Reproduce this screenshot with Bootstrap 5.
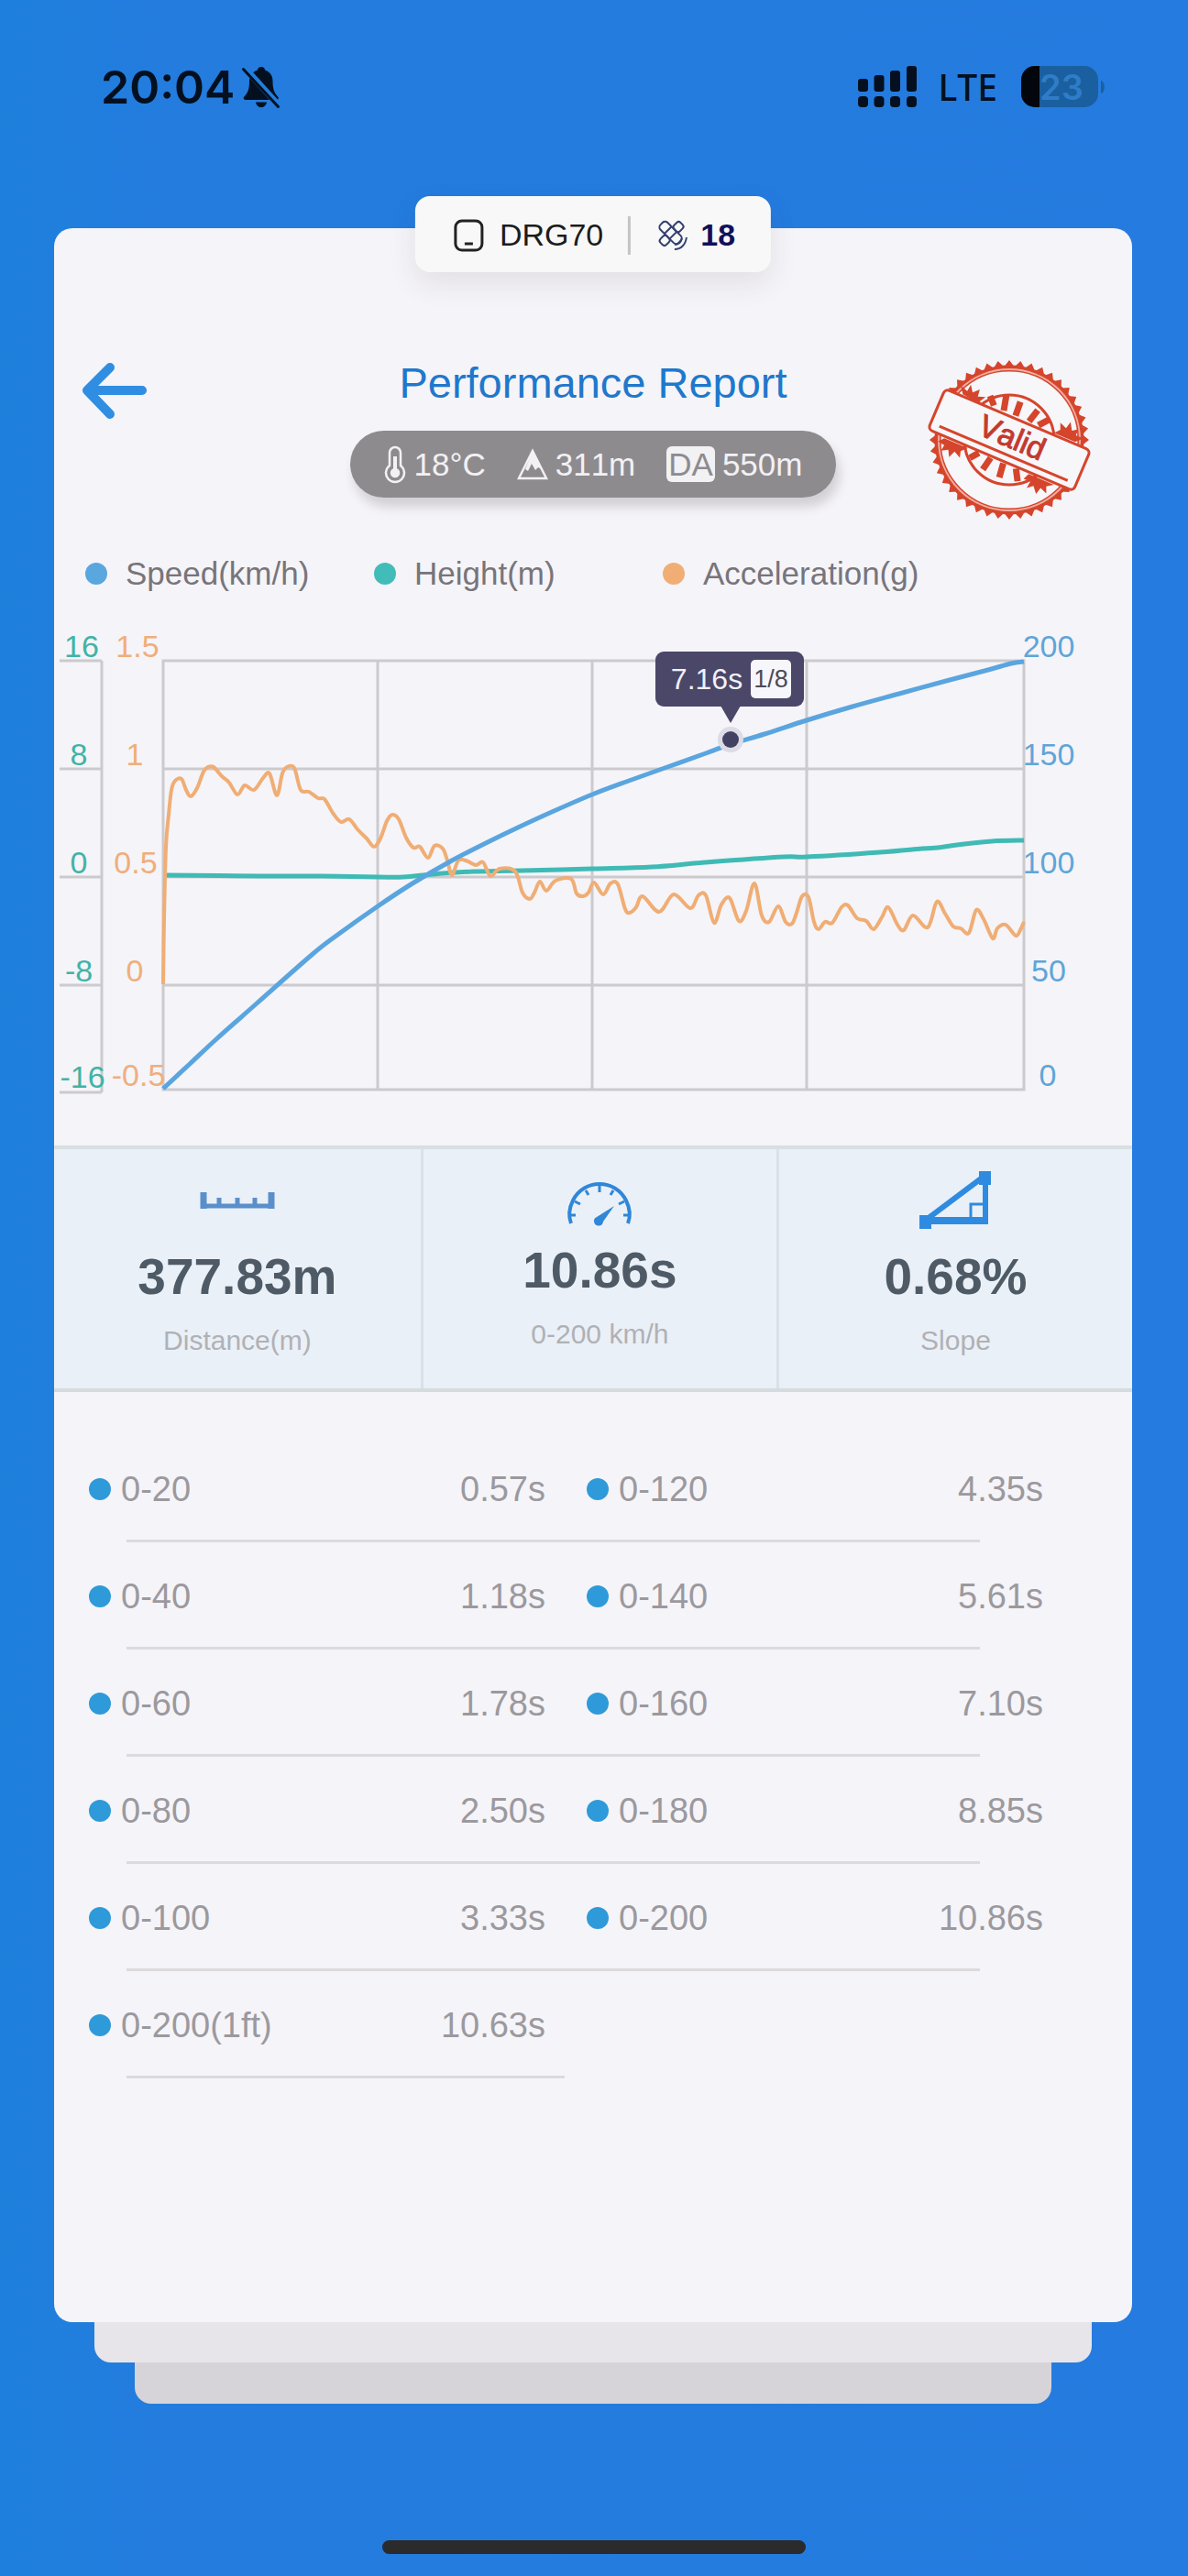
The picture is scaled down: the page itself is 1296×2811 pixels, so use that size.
<!DOCTYPE html>
<html lang="en">
<head>
<meta charset="utf-8">
<meta name="viewport" content="width=device-width, initial-scale=1">
<title>Performance Report</title>
<link href="https://cdn.jsdelivr.net/npm/bootstrap@5.3.0/dist/css/bootstrap.min.css" rel="stylesheet">
<style>
  body { background: linear-gradient(90deg, #1f80dc 0%, #237cde 14%, #257bdf 100%); font-family: "Liberation Sans", Arial, sans-serif; font-kerning: none; color: #77757b; }
  svg { display: block; flex: none; overflow: visible; }
  .status-bar { padding: 62px 90px 121px 110px; height: 249px; line-height: 66px; font-family: Inter, sans-serif; color: #04101f; }
  .clock { font-size: 50px; font-weight: 600; }
  .carrier { font-family: "Noto Sans", sans-serif; font-size: 39px; font-weight: 500; margin: 0 26px 0 24px; }
  .sheet { margin: 0 61px 0 59px; background: #f5f4f8; border-radius: 20px; padding-bottom: 266px; }
  .layer { height: 44px; border-radius: 0 0 18px 18px; }
  .layer-a { margin: 0 105px 0 103px; background: #e7e5e9; }
  .layer-b { margin: 0 149px 0 147px; background: #d6d4d8; height: 45px; }
  .home-bar { width: 462px; height: 15px; border-radius: 8px; background: #2a2b2a; margin: 149px auto 24px; }
  .chip { top: -35px; height: 83px; padding: 2px 39px 0 42px; border-radius: 16px; background: #f7f8f7; font-size: 34px; color: #1c1c1c; box-shadow: 0 12px 30px rgba(60,50,60,.1); }
  .chip-line { width: 3px; height: 42px; background: #c4c4c6; margin: 0 29px 0 27px; }
  .sats { color: #10105c; margin-left: 13px; }
  .head { display: grid; grid-template-columns: 1fr auto 1fr; align-items: start; padding: 141px 39px 0 27px; }
  .head-mid { padding-left: 12px; }
  .title { font-size: 47px; line-height: 56px; color: #1f78cc; margin-bottom: 24px; }
  .weather { height: 73px; padding: 0 37px 0 36px; gap: 34px; border-radius: 37px; background: #8e8b8f; color: #f2f1f3; font-size: 35px; line-height: 39px; box-shadow: 4px 10px 12px rgba(70,60,70,.2); }
  .da { background: #f2f1f3; color: #8e8b8f; border-radius: 6px; padding: 0 2px; }
  .legend { padding: 0 34px; margin-top: 38px; font-size: 35px; line-height: 40px; color: #77757b; }
  .legend li { width: 315px; gap: 20px; white-space: nowrap; }
  .dot { width: 24px; height: 24px; border-radius: 50%; background: #2f9ad9; flex: none; }
  .dot-speed { background: #5aa6df; } .dot-height { background: #42bcb9; } .dot-accel { background: #f1ae74; }
  .stats { background: #eaf0f7; border-top: 4px solid #d8dfe1; border-bottom: 4px solid #d6dbdf; }
  .stat { padding-bottom: 30px; min-height: 261px; }
  .stat:first-child { flex: 0 0 34%; }
  .stat + .stat { border-left: 3px solid #dce1e7; }
  .stat-icon { height: 108px; padding-top: 4px; }
  .stat-icon-mid { height: 101px; padding-top: 18px; }
  .stat b { font-size: 55px; line-height: 62px; color: #4e5a66; }
  .stat span { font-size: 30px; line-height: 34px; color: #b0b1b6; margin-top: 22px; }
  .splits { padding: 47px 52px 0 38px; font-size: 38px; line-height: 44px; color: #9b999e; }
  .split-row { height: 114px; padding-top: 4px; }
  .split-row > div { width: 50%; padding-right: 45px; gap: 11px; }
  .rule { height: 3px; background: #dddade; margin: 0 114px 0 41px; }
  .rule-half { margin-right: 567px; }
</style>
</head>
<body>
<header class="status-bar d-flex justify-content-between">
  <div class="d-flex align-items-center gap-2">
    <span class="clock">20:04</span>
    <svg width="42" height="46" viewBox="0 0 42 46" fill="#04101f"><path d="M21 1c2.500 0 4 1.500 4 3.500 6 2 8.500 6.500 8.500 12 0 10 2 13 6 17.500.8 1.500 0 3-2 3H4c-2 0-2.800-1.500-2-3 4-4.500 6-7.500 6-17.500 0-5.500 3-10 9-12C17 2.500 18.500 1 21 1zM15 39.500h12c-.5 3.500-3 5.500-6 5.500s-5.500-2-6-5.500z"/><path d="M3 2l38 42" stroke="#227dde" stroke-width="7"/><path d="M1.500 3.500l38 41" stroke="#04101f" stroke-width="3" stroke-linecap="round"/></svg>
  </div>
  <div class="d-flex align-items-center">
    <svg width="64" height="46" viewBox="0 0 64 46" fill="#04101f"><rect y="14" width="11" height="14" rx="3"/><rect x="17.500" y="10" width="11" height="18" rx="3"/><rect x="35" y="5" width="11" height="23" rx="3"/><rect x="53" width="11" height="28" rx="3"/><rect y="33" width="11" height="12" rx="4"/><rect x="17.500" y="33" width="11" height="12" rx="4"/><rect x="35" y="33" width="11" height="12" rx="4"/><rect x="53" y="33" width="11" height="12" rx="4"/></svg>
    <span class="carrier">LTE</span>
    <svg width="92" height="46" viewBox="0 0 92 46"><rect width="84" height="45" rx="15" fill="#1a5f9f"/><path d="M20 0H15A15 15 0 0 0 0 15V30A15 15 0 0 0 15 45H20z" fill="#03060c"/><path d="M87 16c5 1 5 13 0 14z" fill="#1a5f9f"/><text x="44" y="37" text-anchor="middle" font-family="Inter, sans-serif" font-weight="600" font-size="38" fill="#2f7cc8">23</text></svg>
  </div>
</header>

<main class="sheet position-relative">
  <div class="chip position-absolute start-50 translate-middle-x d-flex align-items-center text-nowrap">
    <svg class="me-3" width="34" height="36" viewBox="0 0 34 36" fill="none" stroke="#222" stroke-width="3"><rect x="2" y="2" width="29" height="32" rx="7"/><path d="M12 27h9"/></svg>
    <span>DRG70</span>
    <span class="chip-line"></span>
    <svg width="34" height="34" viewBox="0 0 34 34" fill="none" stroke="#34406e" stroke-width="2"><g transform="rotate(45 15 15)"><rect x="11" y="-1" width="9" height="10" rx="3"/><rect x="11" y="20" width="9" height="10" rx="3"/></g><g transform="rotate(-45 15 15)"><rect x="10" y="0" width="11" height="28" rx="4"/><path d="M10 10h11M10 18h11"/></g><path d="M19 27c4 0 7-3 8-7M19 32c7 0 12-5 13-13"/></svg>
    <strong class="sats">18</strong>
  </div>

  <div class="head">
    <div>
      <button type="button" class="btn p-0 border-0 mt-1" aria-label="Back"><svg width="74" height="64" viewBox="0 0 74 64" fill="none" stroke="#2f8ee2" stroke-width="10" stroke-linecap="round" stroke-linejoin="round"><path d="M34 7L9 32l25 26M9 32h60"/></svg></button>
    </div>
    <div class="head-mid d-flex flex-column align-items-center">
      <h1 class="title fw-normal">Performance Report</h1>
      <div class="weather d-flex align-items-center text-nowrap">
        <span class="d-flex align-items-center gap-2"><svg width="26" height="42" viewBox="0 0 26 42" fill="none" stroke="#f2f1f3" stroke-width="2.500"><path d="M7 22V8a6 6 0 0 1 12 0v14a10 10 0 1 1-12 0z"/><path d="M13 12v16" stroke-width="4"/><circle cx="13" cy="30" r="4" fill="#f2f1f3"/></svg>18°C</span>
        <span class="d-flex align-items-center gap-2"><svg width="34" height="34" viewBox="0 0 34 34"><path d="M17 2L32 32H2z" fill="none" stroke="#f2f1f3" stroke-width="2.500"/><path d="M17 2L27 22l-4-2-3 3-4-7-4 8-3-2z" fill="#f2f1f3"/></svg>311m</span>
        <span class="d-flex align-items-center gap-2"><span class="da">DA</span>550m</span>
      </div>
    </div>
    <div class="d-flex justify-content-end">
      <svg width="180" height="178" viewBox="37 20 180 178" role="img" aria-label="Valid" fill="none" stroke="#d5452c">
        <path id="teeth" fill="#d5452c" stroke="none"/>
        <circle cx="122" cy="110" r="78" stroke-width="7" fill="#f7f6f9"/>
        <circle cx="122" cy="110" r="77" stroke-width="2" stroke="#f2ada0"/>
        <circle cx="122" cy="110" r="49" stroke-width="3"/>
        <g transform="rotate(23 122 110)">
          <path d="M92 82l-8-8M104 83l-4-17M118 83l-1-16M134 83l4-15M145 83l8-10M97 136l-7 9M111 136l-3 15M126 136l2 16M141 136l7 12" stroke-width="7"/>
          <g fill="#d5452c" stroke="none"><path d="M56 84l-6-8 9 3 1-8 5 7 6-6 1 8 8-3-4 7 6 3z"/><path d="M164 84l5-6-3-7 8 3 2-8 5 8 6-4 0 7 9 0-7 7z"/><path d="M56 136l28 0-6 6 2 7-8-4-3 8-4-7-7 4 1-7-8-1z"/><path d="M156 136h30l-7 5 3 7-8-3-2 8-6-7-6 5 1-8-8 0z"/></g>
          <rect x="36" y="86" width="172" height="48" rx="5" fill="#f7f6f9" stroke-width="3"/>
          <path d="M46 126h152" stroke-width="3"/>
          <text x="124" y="118" text-anchor="middle" font-size="34" fill="#c23a30" stroke="#c23a30" stroke-width="1" font-family="Liberation Sans, Arial, sans-serif">Valid</text>
        </g>
      </svg>
    </div>
  </div>

  <ul class="legend list-unstyled d-flex mb-0">
    <li class="d-flex align-items-center"><i class="dot dot-speed"></i>Speed(km/h)</li>
    <li class="d-flex align-items-center"><i class="dot dot-height"></i>Height(m)</li>
    <li class="d-flex align-items-center"><i class="dot dot-accel"></i>Acceleration(g)</li>
  </ul>

  <svg class="w-100 h-auto" viewBox="59 646 1176 604" font-family="Liberation Sans, Arial, sans-serif" font-size="34" text-anchor="middle" role="img" aria-label="Speed, height and acceleration over time">
    <path fill="none" stroke="#cccacd" stroke-width="3" d="M65 721h46M65 839h46M65 957h46M65 1075h46M65 1192h46M111 721v471M178 721h939v468H178zM178 839h939M178 957h939M178 1075h939M412 721v468M646 721v468M880 721v468"/>
    <g fill="#41b3a6"><text x="89" y="717">16</text><text x="86" y="835">8</text><text x="86" y="953">0</text><text x="86" y="1071">-8</text><text x="90" y="1187">-16</text></g>
    <g fill="#efae7c"><text x="150" y="717">1.5</text><text x="147" y="835">1</text><text x="148" y="953">0.5</text><text x="147" y="1071">0</text><text x="151" y="1185">-0.5</text></g>
    <g fill="#5fa5d8"><text x="1144" y="717">200</text><text x="1144" y="835">150</text><text x="1144" y="953">100</text><text x="1144" y="1071">50</text><text x="1143" y="1185">0</text></g>
    <g fill="none" stroke-linejoin="round"><path id="height" stroke="#3fbab5" stroke-width="5"/><path id="accel" stroke="#f0ad74" stroke-width="4"/><path id="speed" stroke="#5aa5df" stroke-width="5"/></g>
    <circle cx="797" cy="807" r="14" fill="#dcdbe6"/><circle cx="797" cy="807" r="9" fill="#434162"/>
    <path d="M786 770h22l-11 19z" fill="#4a4769"/><rect x="715" y="711" width="162" height="60" rx="9" fill="#4a4769"/>
    <text x="771" y="752" font-size="32" fill="#f1f0f5">7.16s</text>
    <rect x="819" y="720" width="44" height="42" rx="5" fill="#f7f6fb"/><text x="841" y="750" font-size="27" fill="#4c4a55">1/8</text>
  </svg>

  <section class="stats d-flex">
    <div class="stat d-flex flex-column align-items-center">
      <div class="stat-icon d-flex align-items-center"><svg width="84" height="20" viewBox="0 0 84 20" fill="none" stroke="#5b8fca" stroke-width="7"><path d="M5 1v18M79 1v18"/><path d="M2 16h80M22 7v8M42 7v8M61 7v8" stroke-width="5"/></svg></div>
      <b>377.83m</b><span>Distance(m)</span>
    </div>
    <div class="stat col d-flex flex-column align-items-center">
      <div class="stat-icon-mid d-flex align-items-center"><svg width="70" height="47" viewBox="0 0 70 47" fill="none" stroke="#2f87d8" stroke-width="4"><path d="M4 45C1 37 2 28 6 20 18-4 52-4 64 20c4 8 5 17 2 25"/><path d="M3 36h6M8 21l6 3M20 9l3 5M35 4v7M50 9l-3 5M62 21l-6 3M67 36h-6" stroke-width="3"/><path d="M51 26L39 43a5 5 0 1 1-7-5z" fill="#2f87d8" stroke="none"/></svg></div>
      <b>10.86s</b><span>0-200 km/h</span>
    </div>
    <div class="stat col d-flex flex-column align-items-center">
      <div class="stat-icon d-flex align-items-center"><svg width="78" height="64" viewBox="0 0 78 64" fill="none" stroke="#2f8be0"><path d="M6 54L70 6" stroke-width="6"/><path d="M6 54h68" stroke-width="8"/><path d="M72 6v52" stroke-width="6"/><path d="M56 52V36h16" stroke-width="3"/><path d="M0 48h13v15H0zM65 0h13v15H65z" fill="#2f8be0" stroke="none"/></svg></div>
      <b>0.68%</b><span>Slope</span>
    </div>
  </section>

  <section class="splits" id="splits"></section>
</main>
<div class="layer layer-a"></div>
<div class="layer layer-b"></div>
<div class="home-bar"></div>

<script src="https://cdn.jsdelivr.net/npm/bootstrap@5.3.0/dist/js/bootstrap.bundle.min.js"></script>
<script>
  // Smooth curve through a flat list of x,y pairs
  function curve(id, a) {
    const p = []; for (let i = 0; i < a.length; i += 2) p.push([a[i], a[i + 1]]);
    let d = 'M' + p[0];
    for (let i = 0; i < p.length - 1; i++) {
      const o = p[i - 1] || p[i], s = p[i], e = p[i + 1], n = p[i + 2] || e;
      d += `C${s[0] + (e[0] - o[0]) / 6} ${s[1] + (e[1] - o[1]) / 6} ${e[0] - (n[0] - s[0]) / 6} ${e[1] - (n[1] - s[1]) / 6} ${e[0]} ${e[1]}`;
    }
    document.getElementById(id).setAttribute('d', d);
  }
  curve('speed', [178,1188,207,1161,237,1133,280,1095,340,1042,367,1021,412,989,450,964,493,939,530,920,565,903,602,886,646,867,686,852,728,837,770,822,797,812,834,801,880,786,930,771,981,757,1036,742,1078,731,1103,724,1117,722]);
  curve('height', [182,955,283,956,350,956,412,957,440,957,483,953,517,951,570,950,646,948,711,946,770,941,855,935,880,935,960,930,1006,926,1023,925,1044,922,1082,918,1117,917]);
  curve('accel', [178,1074,179,1003,181,924,184,889,187,862,191,852,198,850,203,862,208,869,215,860,222,842,227,837,233,837,242,847,250,854,259,867,267,857,277,862,287,849,294,844,302,868,308,844,313,837,321,838,328,862,337,864,347,871,354,872,363,887,372,897,381,894,390,905,400,915,408,924,415,915,422,896,428,889,435,894,443,914,451,925,458,924,467,936,474,923,483,926,488,939,493,955,500,939,508,939,519,944,527,941,535,956,545,948,562,951,570,974,578,981,583,974,589,962,596,972,606,961,623,959,629,975,636,978,642,974,648,963,658,976,666,964,674,965,682,992,687,996,694,990,701,978,719,995,735,976,753,991,762,977,770,977,779,1007,787,987,796,980,806,1005,814,994,823,964,831,999,839,1006,849,989,857,1006,864,1008,869,996,875,978,882,979,888,1006,893,1014,900,1006,908,1007,918,990,925,988,935,1002,945,1005,953,1014,962,1001,969,990,979,1009,986,1015,996,999,1012,1012,1022,984,1031,997,1040,1011,1048,1013,1057,1018,1065,993,1073,1003,1083,1024,1088,1013,1097,1009,1108,1021,1113,1015,1117,1006]);

  // Serrated edge of the stamp
  let t = '';
  for (let i = 0; i < 88; i++) {
    const r = i % 2 ? 80 : 87, g = i * Math.PI / 44;
    t += (i ? 'L' : 'M') + (122 + r * Math.cos(g)) + ' ' + (110 + r * Math.sin(g));
  }
  document.getElementById('teeth').setAttribute('d', t + 'z');

  const rows = [
    ['0-20', '0.57s', '0-120', '4.35s'], ['0-40', '1.18s', '0-140', '5.61s'], ['0-60', '1.78s', '0-160', '7.10s'],
    ['0-80', '2.50s', '0-180', '8.85s'], ['0-100', '3.33s', '0-200', '10.86s'], ['0-200(1ft)', '10.63s']
  ];
  const cell = (n, v) => `<div class="d-flex align-items-center"><i class="dot"></i><span>${n}</span><span class="ms-auto">${v}</span></div>`;
  document.getElementById('splits').innerHTML = rows.map(r =>
    `<div class="split-row d-flex">${cell(r[0], r[1])}${r[2] ? cell(r[2], r[3]) : ''}</div><div class="rule ${r[2] ? '' : 'rule-half'}"></div>`).join('');
</script>
</body>
</html>
